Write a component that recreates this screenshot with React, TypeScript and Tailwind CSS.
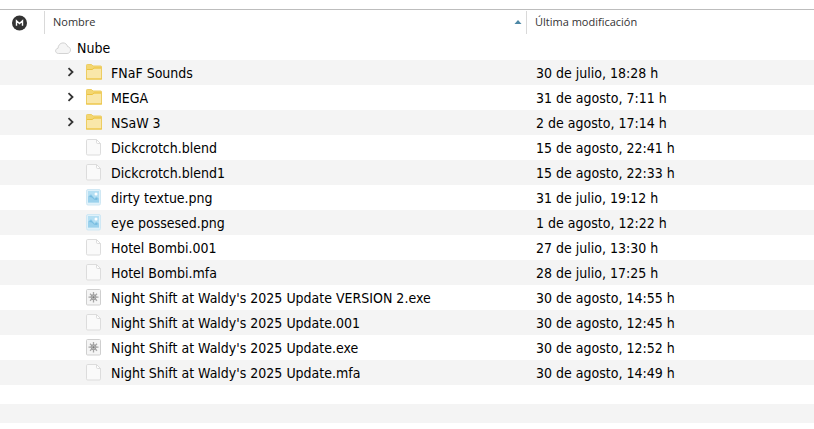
import clsx from "clsx";

type Kind = "folder" | "file" | "image" | "exe";

interface Item {
  name: string;
  kind: Kind;
  modified: string;
}

const items: Item[] = [
  { name: "FNaF Sounds", kind: "folder", modified: "30 de julio, 18:28 h" },
  { name: "MEGA", kind: "folder", modified: "31 de agosto, 7:11 h" },
  { name: "NSaW 3", kind: "folder", modified: "2 de agosto, 17:14 h" },
  { name: "Dickcrotch.blend", kind: "file", modified: "15 de agosto, 22:41 h" },
  { name: "Dickcrotch.blend1", kind: "file", modified: "15 de agosto, 22:33 h" },
  { name: "dirty textue.png", kind: "image", modified: "31 de julio, 19:12 h" },
  { name: "eye possesed.png", kind: "image", modified: "1 de agosto, 12:22 h" },
  { name: "Hotel Bombi.001", kind: "file", modified: "27 de julio, 13:30 h" },
  { name: "Hotel Bombi.mfa", kind: "file", modified: "28 de julio, 17:25 h" },
  {
    name: "Night Shift at Waldy's 2025 Update VERSION 2.exe",
    kind: "exe",
    modified: "30 de agosto, 14:55 h",
  },
  {
    name: "Night Shift at Waldy's 2025 Update.001",
    kind: "file",
    modified: "30 de agosto, 12:45 h",
  },
  {
    name: "Night Shift at Waldy's 2025 Update.exe",
    kind: "exe",
    modified: "30 de agosto, 12:52 h",
  },
  {
    name: "Night Shift at Waldy's 2025 Update.mfa",
    kind: "file",
    modified: "30 de agosto, 14:49 h",
  },
];

function MegaLogo() {
  return (
    <svg width="16" height="16" viewBox="0 0 16 16" aria-label="MEGA">
      <circle cx="7.5" cy="8" r="7.5" fill="#333333" />
      <path
        d="M4.500 10.700V5.800L7.500 8.600l3-2.800v4.900"
        fill="none"
        stroke="#fff"
        strokeWidth="1.400"
      />
    </svg>
  );
}

function CloudIcon() {
  return (
    <svg width="16" height="16" viewBox="0 0 16 16" className="shrink-0">
      <path
        d="M3.600 13.500C1.800 13.500.6 12.400.6 10.900c0-1.400 1-2.400 2.400-2.600C3.200 5.300 5.200 2.900 8 2.900c2.300 0 4.100 1.500 4.600 3.700 1.700.2 2.900 1.600 2.900 3.300 0 2-1.500 3.600-3.400 3.600z"
        fill="#f5f5f5"
        stroke="#d3d3d3"
        strokeWidth="1"
      />
    </svg>
  );
}

function FolderIcon() {
  return (
    <svg width="18" height="18" viewBox="0 0 18 18">
      <path
        d="M1.500 16V2.300a.8.8 0 0 1 .8-.8h4.200L8 3h7.700a.8.8 0 0 1 .8.8V16z"
        fill="#f3d672"
        stroke="#edcd62"
      />
      <path d="M2 7h5.500L9 5.500h7v10H2z" fill="#f9e7a9" />
      <path
        d="M2 6.500h5.300L8.800 5H16M1 16h16"
        fill="none"
        stroke="#ecc33f"
        strokeWidth="1"
      />
    </svg>
  );
}

function FileIcon() {
  return (
    <svg width="18" height="18" viewBox="0 0 18 18">
      <path
        d="M2.700 1.500h8.800l4 4v10.300a1.200 1.200 0 0 1-1.200 1.200H2.700a1.200 1.200 0 0 1-1.200-1.200V2.700a1.200 1.200 0 0 1 1.200-1.200z"
        fill="#fafafa"
        stroke="#dcdcdc"
      />
      <path d="M11.500 1.500v2.800a1.200 1.200 0 0 0 1.200 1.200h2.800z" fill="#fff" stroke="#dcdcdc" />
    </svg>
  );
}

function ImageIcon() {
  return (
    <svg width="18" height="18" viewBox="0 0 18 18">
      <rect x="1.500" y="1.500" width="14" height="15.500" rx="1.500" fill="#dff1fa" stroke="#d0e8f4" />
      <rect x="3" y="3" width="11" height="11.500" fill="#b5dff3" />
      <path d="M3 8.500l3-2.500 3.500 4 2-1.500 2.500 2v4H3z" fill="#9bd1ec" />
      <path d="M4 8.700L6 7l3.500 4 2-1.500 1.500 1.500-1.500 1-2.500-.5L7 9.500z" fill="#76bce0" />
      <circle cx="11" cy="6" r="1.500" fill="#fff" />
    </svg>
  );
}

function ExeIcon() {
  return (
    <svg width="18" height="18" viewBox="0 0 18 18">
      <rect x="1.500" y="1.500" width="14" height="15.500" rx="1" fill="#f5f5f5" stroke="#cfcfcf" />
      <path
        d="M8.500 4v10.500M3.500 9.200h10M5 5.700l7 7M12 5.700l-7 7"
        stroke="#a6a6a6"
        strokeWidth="1.300"
      />
      <circle cx="8.500" cy="9.200" r="2.500" fill="#bcbcbc" stroke="#999" />
      <circle cx="8.500" cy="9.200" r="1" fill="#777" />
    </svg>
  );
}

function ItemIcon({ kind }: { kind: Kind }) {
  if (kind === "folder") return <FolderIcon />;
  if (kind === "image") return <ImageIcon />;
  if (kind === "exe") return <ExeIcon />;
  return <FileIcon />;
}

export default function App() {
  return (
    <main className="bg-white pt-[9px] font-['DejaVu_Sans_Condensed','DejaVu_Sans',sans-serif] text-black">
      <table className="w-full table-fixed border-t border-[#bdbdbd] text-left">
        <colgroup>
          <col className="w-[45px]" />
          <col className="w-[482px]" />
          <col />
        </colgroup>
        <thead className="font-[family-name:'Open_Sans','Noto_Sans',sans-serif] text-[11px] text-[#333333]">
          <tr className="h-[25px]">
            <th className="p-0 font-normal">
              <div className="flex h-[23px] items-center border-r border-[#d9d9d9] pt-px pl-3">
                <MegaLogo />
              </div>
            </th>
            <th className="p-0 font-normal" aria-sort="ascending">
              <button className="flex h-[23px] w-full items-center justify-between border-r border-[#d9d9d9] pr-1 pl-2">
                Nombre
                <svg width="8" height="5" viewBox="0 0 8 5">
                  <path d="M4 0L7.500 4H.5z" fill="#4c87a5" />
                </svg>
              </button>
            </th>
            <th className="p-0 font-normal">
              <button className="flex h-[23px] items-center pl-2">Última modificación</button>
            </th>
          </tr>
        </thead>
        <tbody className="text-sm leading-4">
          <tr className="h-[25px]">
            <td className="p-0" />
            <td className="p-0 pt-0.5">
              <div className="flex items-center gap-1.5 pl-2.5">
                <CloudIcon />
                Nube
              </div>
            </td>
            <td className="p-0" />
          </tr>
          {items.map((item, i) => (
            <tr key={item.name} className={clsx("h-[25px]", i % 2 === 0 && "bg-[#f4f4f4]")}>
              <td className="p-0" />
              <td className="p-0">
                <div className="flex items-center pl-5">
                  <div className="flex w-5 shrink-0">
                    {item.kind === "folder" && (
                      <button aria-label={`Abrir ${item.name}`} className="px-0.5">
                        <svg width="8" height="10" viewBox="0 0 8 10">
                          <path
                            d="M1.500 1.200L5.500 5l-4 3.800"
                            fill="none"
                            stroke="#333"
                            strokeWidth="1.800"
                          />
                        </svg>
                      </button>
                    )}
                  </div>
                  <div className="mr-2 shrink-0">
                    <ItemIcon kind={item.kind} />
                  </div>
                  <span className="pt-0.5 whitespace-nowrap">{item.name}</span>
                </div>
              </td>
              <td className="p-0 pt-0.5 pl-[9px] whitespace-nowrap">{item.modified}</td>
            </tr>
          ))}
        </tbody>
      </table>
      <div className="mt-[19px] h-[19px] bg-[#f4f4f4]" />
    </main>
  );
}
